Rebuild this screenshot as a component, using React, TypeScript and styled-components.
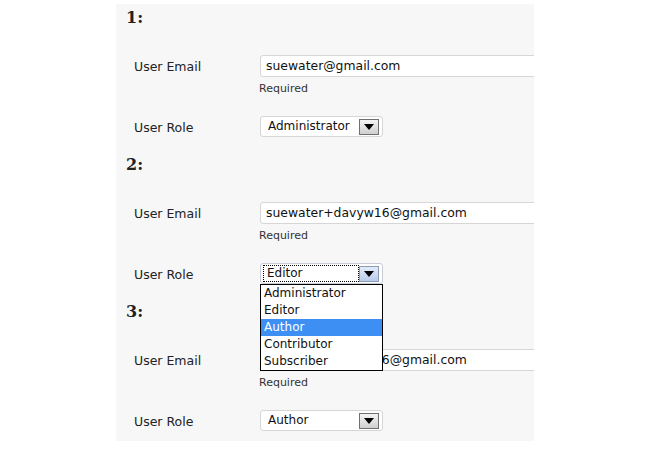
import styled, { createGlobalStyle } from 'styled-components';

const GlobalStyle = createGlobalStyle`
  html, body {
    margin: 0;
    background: #ffffff;
  }
  body {
    font-family: 'DejaVu Sans', Verdana, sans-serif;
    color: #222;
  }
`;

const roles = ['Administrator', 'Editor', 'Author', 'Contributor', 'Subscriber'];

type Invite = {
  email: string;
  role: string;
  open?: boolean;
};

const invites: Invite[] = [
  { email: 'suewater@gmail.com', role: 'Administrator' },
  { email: 'suewater+davyw16@gmail.com', role: 'Editor', open: true },
  { email: 'suewater+davyw16@gmail.com', role: 'Author' },
];

const Arrow = () => (
  <svg width="10" height="6" viewBox="0 0 10 6">
    <path d="M0 0 L10 0 L5 6 Z" fill="#000" />
  </svg>
);

const RoleSelect = ({ value, open }: { value: string; open?: boolean }) => (
  <SelectWrap>
    <SelectBox $focused={open}>
      <SelectValue $focused={open}>{value}</SelectValue>
      <ArrowButton $focused={open}>
        <Arrow />
      </ArrowButton>
    </SelectBox>
    {open && (
      <OptionList>
        {roles.map((r) => (
          <OptionItem key={r} $active={r === 'Author'}>
            {r}
          </OptionItem>
        ))}
      </OptionList>
    )}
  </SelectWrap>
);

const App = () => {
  return (
    <>
      <GlobalStyle />
      <Page>
        <Panel>
          {invites.map((inv, i) => (
            <Section key={i} $last={i === invites.length - 1}>
              <Heading>{i + 1}:</Heading>
              <FieldRow>
                <Label>User Email</Label>
                <EmailInput>{inv.email}</EmailInput>
              </FieldRow>
              <Hint>Required</Hint>
              <FieldRow>
                <Label>User Role</Label>
                <RoleSelect value={inv.role} open={inv.open} />
              </FieldRow>
            </Section>
          ))}
        </Panel>
      </Page>
    </>
  );
};

export default App;

const Page = styled.div`
  width: 650px;
  height: 449px;
  padding: 4px 0 0 116px;
  box-sizing: border-box;
  overflow: hidden;
`;

const Panel = styled.div`
  width: 418px;
  height: 437px;
  background: #f7f7f7;
  padding-top: 4px;
  box-sizing: border-box;
  overflow: hidden;
`;

const Section = styled.div<{ $last?: boolean }>`
  display: flex;
  flex-direction: column;
  padding-bottom: ${(p) => (p.$last ? 0 : 18)}px;
  position: relative;
  z-index: ${(p) => (p.$last ? 0 : 1)};
`;

const Heading = styled.div`
  font-family: 'DejaVu Serif', Georgia, serif;
  font-weight: bold;
  font-size: 16px;
  line-height: 20px;
  height: 20px;
  padding-left: 10px;
  color: #222;
  margin-bottom: 27px;
`;

const FieldRow = styled.div`
  display: flex;
  align-items: center;
  padding-left: 18px;
`;

const Label = styled.div`
  width: 126px;
  flex: none;
  font-size: 12.5px;
  padding-top: 1px;
  color: #222;
`;

const EmailInput = styled.div`
  flex: none;
  width: 320px;
  height: 22px;
  box-sizing: border-box;
  border: 1px solid #d6d6d6;
  border-radius: 3px;
  background: #fff;
  padding-left: 5px;
  font-size: 12.4px;
  line-height: 20px;
  color: #111;
  white-space: nowrap;
`;

const Hint = styled.div`
  margin: 5px 0 20px 143px;
  height: 14px;
  font-size: 11px;
  line-height: 14px;
  color: #333;
`;

const SelectWrap = styled.div`
  position: relative;
  flex: none;
`;

const SelectBox = styled.div<{ $focused?: boolean }>`
  display: flex;
  align-items: center;
  width: 123px;
  height: 21px;
  box-sizing: border-box;
  border: 1px solid ${(p) => (p.$focused ? '#c7ccd6' : '#d6d6d6')};
  border-radius: 3px;
  background: #fff;
  padding: 0 3px 0 2px;
`;

const SelectValue = styled.div<{ $focused?: boolean }>`
  flex: 1;
  height: 17px;
  box-sizing: border-box;
  border: 1px dotted ${(p) => (p.$focused ? '#000' : 'transparent')};
  padding-left: ${(p) => (p.$focused ? 3 : 4)}px;
  font-size: 12px;
  line-height: 15px;
  color: #111;
`;

const ArrowButton = styled.div<{ $focused?: boolean }>`
  width: 20px;
  height: 16px;
  box-sizing: border-box;
  display: flex;
  align-items: center;
  justify-content: center;
  border: 1px solid ${(p) => (p.$focused ? '#8d9ab5' : '#707070')};
  background: ${(p) =>
    p.$focused
      ? 'linear-gradient(#e3ebf8, #b9cbec)'
      : 'linear-gradient(#f4f4f4, #cfcfcf)'};
`;

const OptionList = styled.div`
  position: absolute;
  top: 21px;
  left: 0;
  width: 123px;
  box-sizing: border-box;
  border: 1px solid #000;
  background: #fff;
  z-index: 5;
`;

const OptionItem = styled.div<{ $active?: boolean }>`
  height: 17px;
  line-height: 17px;
  padding-left: 3px;
  font-size: 12px;
  color: ${(p) => (p.$active ? '#fff' : '#111')};
  background: ${(p) => (p.$active ? '#3d8ff4' : 'transparent')};
`;
